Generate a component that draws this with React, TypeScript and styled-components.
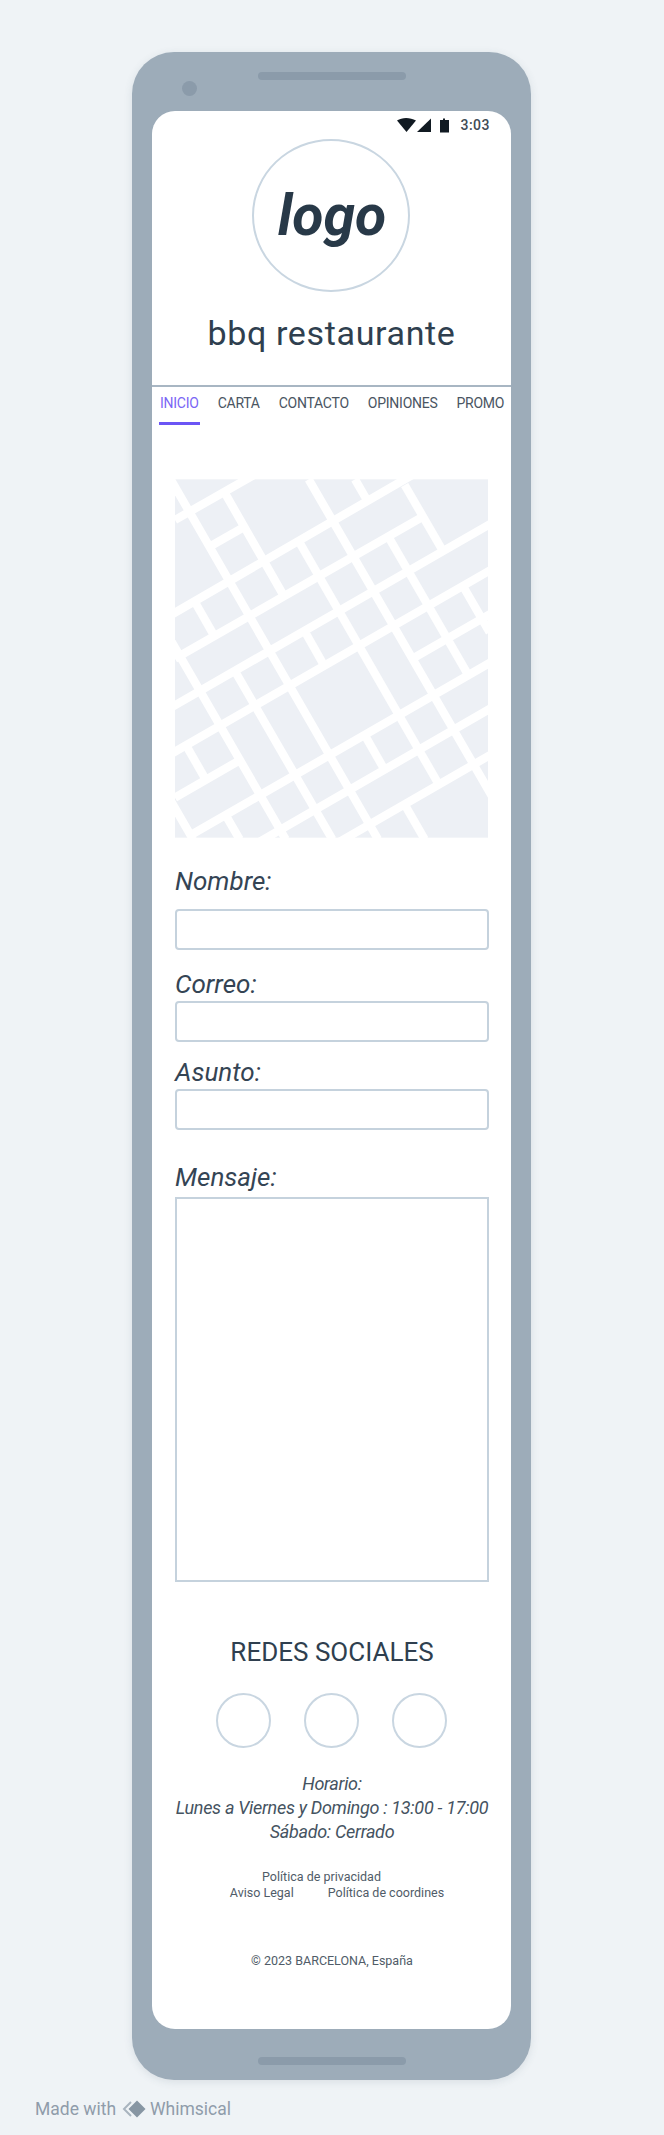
import React from "react";
import styled, { createGlobalStyle } from "styled-components";

const GlobalStyle = createGlobalStyle`
  html, body {
    margin: 0;
    padding: 0;
    background: #eff3f6;
  }
  body {
    font-family: Roboto, "Liberation Sans", sans-serif;
  }
`;

const Page = styled.div`
  width: 664px;
  height: 2135px;
  padding: 52px 0 0 132px;
  box-sizing: border-box;
  position: relative;
`;

const Phone = styled.div`
  position: relative;
  width: 399px;
  height: 2028px;
  display: flex;
  flex-direction: column;
  align-items: center;
  background: #9dacb9;
  border-radius: 42px;
  box-shadow: 0 2px 8px rgba(60, 80, 100, 0.12);
`;

const Speaker = styled.div<{ $top: number }>`
  width: 148px;
  height: 8px;
  margin-top: ${(p) => p.$top}px;
  flex: none;
  border-radius: 4px;
  background: #8b9baa;
`;

const Camera = styled.div`
  position: absolute;
  top: 29px;
  left: 50px;
  width: 15px;
  height: 15px;
  border-radius: 50%;
  background: #8b9baa;
`;

const Screen = styled.div`
  width: 359px;
  height: 1918px;
  margin-top: 31px;
  flex: none;
  background: #fff;
  border-radius: 23px;
  overflow: hidden;
`;

const StatusBar = styled.div`
  height: 28px;
  padding-right: 21px;
  display: flex;
  align-items: center;
  justify-content: flex-end;
  color: #404b56;
  font-size: 14px;
  font-weight: 500;
  letter-spacing: 0.5px;
`;

const StatusIcons = styled.svg`
  width: 55px;
  height: 16px;
  margin-right: 9px;
`;

const LogoCircle = styled.div`
  width: 158px;
  height: 153px;
  margin: 0 0 0 100px;
  padding-left: 2px;
  box-sizing: border-box;
  display: flex;
  align-items: center;
  justify-content: center;
  border: 2px solid #c9d6e1;
  border-radius: 50%;
  color: #283948;
  font-size: 57px;
  font-weight: 700;
  font-style: italic;
`;

const Title = styled.h1`
  margin: 19px 0 0;
  height: 74px;
  text-align: center;
  color: #2f3f4f;
  font-size: 34px;
  line-height: 44px;
  font-weight: 400;
  letter-spacing: 0.65px;
`;

const Nav = styled.nav`
  height: 56px;
  padding: 0 0 0 7px;
  display: flex;
  gap: 17px;
  border-top: 2px solid #a8b6c3;
`;

const NavItem = styled.a<{ $active?: boolean }>`
  height: 35px;
  padding: 0 1px;
  line-height: 32px;
  color: ${(p) => (p.$active ? "#7a66f5" : "#4a5562")};
  font-size: 14px;
  letter-spacing: -0.25px;
  border-bottom: ${(p) => (p.$active ? "3px solid #6b55f5" : "3px solid transparent")};
`;

const Content = styled.main`
  padding: 36px 22px 0 23px;
`;

const MapBox = styled.svg`
  display: block;
  width: 313px;
  height: 359px;
`;

const Label = styled.label<{ $top: number; $gap: number }>`
  display: block;
  margin-top: ${(p) => p.$top}px;
  margin-bottom: ${(p) => p.$gap}px;
  color: #344454;
  font-size: 26px;
  line-height: 34px;
  font-style: italic;
`;

const Input = styled.div`
  height: 41px;
  box-sizing: border-box;
  border: 2px solid #c5d2dd;
  border-radius: 4px;
  background: #fff;
`;

const TextArea = styled.div`
  height: 385px;
  box-sizing: border-box;
  border: 2px solid #c5d2dd;
`;

const SectionTitle = styled.h2`
  margin: 52px 0 0;
  text-align: center;
  color: #2f3f4f;
  font-size: 26px;
  line-height: 36px;
  font-weight: 400;
`;

const Socials = styled.div`
  margin: 23px 2px 0 0;
  display: flex;
  justify-content: center;
  gap: 33px;
`;

const SocialCircle = styled.div`
  width: 55px;
  height: 55px;
  box-sizing: border-box;
  border: 2px solid #c9d6e1;
  border-radius: 50%;
`;

const Hours = styled.p`
  margin: 24px -10px 0;
  text-align: center;
  white-space: nowrap;
  color: #455361;
  font-size: 18px;
  line-height: 24px;
  letter-spacing: -0.3px;
  font-style: italic;
`;

const Links = styled.div`
  margin-top: 25px;
  text-align: center;
  color: #505c68;
  font-size: 12.5px;
  line-height: 16px;
`;

const LinkRow = styled.div<{ $shift: number }>`
  display: flex;
  justify-content: center;
  gap: 34px;
  margin-left: ${(p) => p.$shift}px;
`;

const Copyright = styled.div`
  margin-top: 52px;
  text-align: center;
  color: #505c68;
  font-size: 12.5px;
  line-height: 16px;
`;

const Credit = styled.div`
  margin: 17px 0 0 -97px;
  display: flex;
  align-items: center;
  color: #8f9caa;
  font-size: 17.5px;
  line-height: 24px;
`;

const CreditIcon = styled.svg`
  width: 24px;
  height: 18px;
  margin: 0 4px 0 6px;
`;

const roads: [number, number, number, number][] = [
  // up-right streets
  [46, 150, 295, 8],
  [150, 230, 250, 173],
  [30, 437, 775, 5],
  [46, 566, 795, 137],
  [30, 715, 1000, 157],
  [30, 854, 1000, 296],
  [760, 565, 1000, 427],
  [85, 1100, 1000, 573],
  [46, 983, 245, 868],
  [290, 1121, 1000, 711],
  [530, 1121, 1000, 850],
  // down-right streets
  [33, 28, 655, 1108],
  [195, 68, 375, 382],
  [418, 215, 840, 948],
  [447, 28, 1000, 984],
  [586, 28, 620, 87],
  [735, 45, 848, 240],
  [686, 200, 925, 614],
  [908, 345, 990, 487],
  [433, 480, 494, 588],
  [104, 393, 165, 500],
  [30, 505, 378, 1108],
  [225, 602, 518, 1108],
  [614, 793, 675, 900],
  [733, 1000, 795, 1108],
  [78, 824, 140, 932],
  [35, 995, 100, 1108],
  [197, 1034, 240, 1108],
];

export default function App() {
  return (
    <Page>
      <GlobalStyle />
      <Phone>
        <Speaker $top={20} />
        <Camera />
        <Screen>
          <StatusBar>
            <StatusIcons viewBox="0 0 55 16">
              <path d="M1 3.5 C6 0 14 0 20 3.5 L10.5 15 Z" fill="#111a22" />
              <path d="M21 15 L35 1.5 V15 Z" fill="#111a22" />
              <path d="M44 3 H47 V1.5 H49 V3 H53 V15.5 H44 Z" fill="#111a22" />
            </StatusIcons>
            3:03
          </StatusBar>
          <LogoCircle>logo</LogoCircle>
          <Title>bbq restaurante</Title>
          <Nav>
            <NavItem $active>INICIO</NavItem>
            <NavItem>CARTA</NavItem>
            <NavItem>CONTACTO</NavItem>
            <NavItem>OPINIONES</NavItem>
            <NavItem>PROMO</NavItem>
          </Nav>
          <Content>
            <MapBox viewBox="46 28 939 1075">
              <rect x="46" y="28" width="939" height="1075" fill="#edf0f5" />
              {roads.map(([x1, y1, x2, y2]) => (
                <line key={`${x1}-${y1}`} x1={x1} y1={y1} x2={x2} y2={y2} stroke="#fff" strokeWidth="25" />
              ))}
            </MapBox>
            <Label $top={26} $gap={11}>Nombre:</Label>
            <Input />
            <Label $top={17} $gap={0}>Correo:</Label>
            <Input />
            <Label $top={13} $gap={0}>Asunto:</Label>
            <Input />
            <Label $top={30} $gap={3}>Mensaje:</Label>
            <TextArea />
            <SectionTitle>REDES SOCIALES</SectionTitle>
            <Socials>
              <SocialCircle />
              <SocialCircle />
              <SocialCircle />
            </Socials>
            <Hours>
              Horario:
              <br />
              Lunes a Viernes y Domingo : 13:00 - 17:00
              <br />
              Sábado: Cerrado
            </Hours>
            <Links>
              <LinkRow $shift={-21}>Política de privacidad</LinkRow>
              <LinkRow $shift={10}>
                <span>Aviso Legal</span>
                <span>Política de coordines</span>
              </LinkRow>
            </Links>
            <Copyright>© 2023 BARCELONA, España</Copyright>
          </Content>
        </Screen>
        <Speaker $top={28} />
      </Phone>
      <Credit>
        Made with
        <CreditIcon viewBox="0 0 24 18">
          <path d="M9 2 L2 9 L9 16" fill="none" stroke="#a9b4bf" strokeWidth="2" />
          <path d="M15 0.5 L23.5 9 L15 17.5 L6.5 9 Z" fill="#8796a3" />
        </CreditIcon>
        Whimsical
      </Credit>
    </Page>
  );
}
